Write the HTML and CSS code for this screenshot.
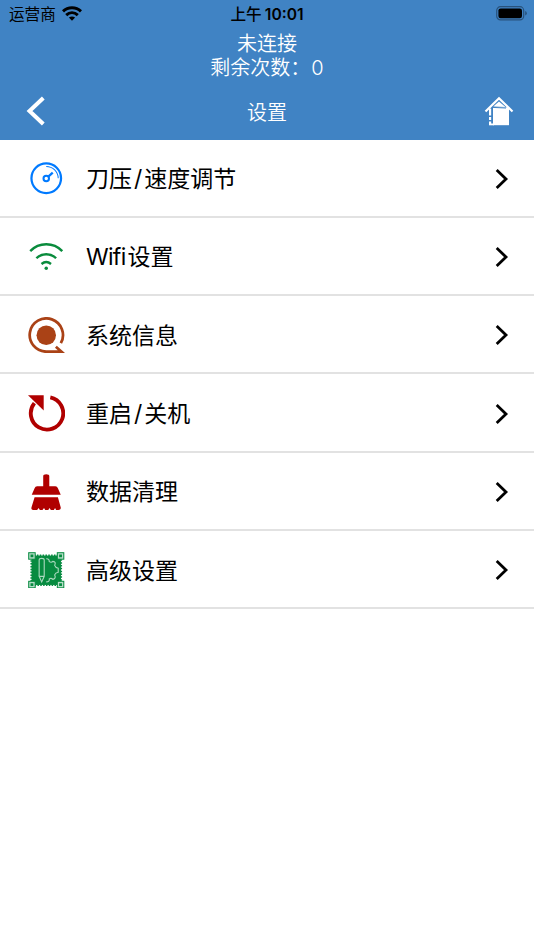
FILE: index.html
```html
<!DOCTYPE html>
<html lang="zh-CN">
<head>
<meta charset="UTF-8" />
<meta name="viewport" content="width=device-width, initial-scale=1.0"/>
<title>设置</title>
<link rel="stylesheet" href="styles.css">
</head>
<body>
<header class="header">
  <!-- Status bar -->
  <div class="status">
    <div class="carrier">
      <span>运营商</span>
      <svg class="signal" width="20" height="15" viewBox="0 0 20 15" fill="none" stroke="#000" stroke-width="3">
        <path d="M1 5.4C6 .6 14 .6 19 5.4"/>
        <path d="M4.2 9.1C7.6 6 12.4 6 15.8 9.1"/>
        <path d="M6.9 11.6Q10 9.3 13.1 11.6L10 14.8Z" fill="#000" stroke="none"/>
      </svg>
    </div>
    <div class="time">上午 <b>10:01</b></div>
    <svg class="battery" width="31" height="15" viewBox="0 0 31 15">
      <rect x=".7" y=".7" width="27" height="13.2" rx="3.8" fill="none" stroke="#28527c" stroke-width="1.2"/>
      <rect x="2.4" y="2.4" width="23.6" height="9.8" rx="2.2"/>
      <path d="M29.2 5Q30.8 5.5 30.8 7.3T29.2 9.6Z" fill="#28527c"/>
    </svg>
  </div>

  <div class="connection">
    <div>未连接</div>
    <div>剩余次数：<span class="count">0</span></div>
  </div>

  <nav class="nav">
    <svg class="back" width="20" height="30" viewBox="0 0 20 30" fill="none" stroke="#fff" stroke-width="4">
      <path d="M18.3 2L4.5 15L18.3 28"/>
    </svg>
    <div class="title">设置</div>
    <svg class="home" width="30" height="30" viewBox="0 0 30 30">
      <path d="M1.5 15.5L15 2.2L28.5 15.5" fill="none" stroke="#fff" stroke-width="2.2"/>
      <path d="M9.3 10.6L15 5.4L21.5 11Z" fill="#fff"/>
      <path d="M9 11.3H25V29.2H9Z" fill="#fff"/>
      <path d="M6.1 12.5V29" stroke="#fff" stroke-width="2.2" stroke-dasharray="7 1.5 3 1.5"/>
      <path d="M5 28.4H10" stroke="#fff" stroke-width="1.8"/>
      <path d="M8.5 11.4L22 12" stroke="#4083c4" stroke-width="1"/>
      <path d="M8.3 12V27" stroke="#4083c4" stroke-width="1"/>
    </svg>
  </nav>
</header>

<main class="menu">
  <div class="row">
    <svg class="icon" viewBox="0 0 36 36" fill="none" stroke="#007aff">
      <circle cx="18" cy="18" r="14.6" stroke-width="2.2"/>
      <circle cx="18" cy="18.3" r="2.7" stroke-width="2"/>
      <path d="M20 16.4L24.4 12.4" stroke-width="2.2"/>
      <path d="M18 6.3A11.8 11.8 0 0 1 29.8 18" stroke-width="1"/>
    </svg>
    <span class="label">刀压<i>/</i>速度调节</span>
    <svg class="arrow" viewBox="0 0 14 20"><path d="M1.7 1L11 10L1.7 19"/></svg>
  </div>
  <div class="row">
    <svg class="icon" viewBox="0 0 36 36" fill="none" stroke="#098b3c" stroke-width="2.4">
      <path d="M2.2 12C11 3 25 3 33.8 12"/>
      <path d="M8.3 19C13.5 13.7 22.5 13.7 27.7 19"/>
      <path d="M13.3 24.6Q18 21 22.7 24.6"/>
      <circle cx="18" cy="28.9" r="1.7" fill="#098b3c" stroke="none"/>
    </svg>
    <span class="label"><span class="latin">Wifi</span><em>设置</em></span>
    <svg class="arrow" viewBox="0 0 14 20"><path d="M1.7 1L11 10L1.7 19"/></svg>
  </div>
  <div class="row">
    <svg class="icon" viewBox="0 0 36 36" fill="none" stroke="#aa4216" stroke-width="2.7">
      <path d="M32.4 25.8A16.4 16.4 0 1 0 18 34.2H33L27.5 29.3"/>
      <circle cx="18" cy="18" r="9.6" fill="#aa4216" stroke="none"/>
    </svg>
    <span class="label">系统信息</span>
    <svg class="arrow" viewBox="0 0 14 20"><path d="M1.7 1L11 10L1.7 19"/></svg>
  </div>
  <div class="row">
    <svg class="icon" viewBox="0 0 36 36">
      <path d="M6.3 8A16 16 0 1 0 22 2.4" fill="none" stroke="#b00000" stroke-width="3.8"/>
      <path d="M0 .3H15.5V15.2Z" fill="#b00000"/>
    </svg>
    <span class="label">重启<i>/</i>关机</span>
    <svg class="arrow" viewBox="0 0 14 20"><path d="M1.7 1L11 10L1.7 19"/></svg>
  </div>
  <div class="row">
    <svg class="icon" viewBox="0 0 36 36" fill="#b00000">
      <path d="M15 12V2.2Q15 .3 18 .3T21 2.2V12H27Q28.8 12 29.5 14L32.3 20.5H3.7L6.5 14Q7.2 12 9 12Z"/>
      <path d="M6.5 23H29.5L32.3 33Q32.5 35.5 30 35.5H27.7L26.7 33.5L25.5 35.5H22.5L21.3 33.5L20 35.5H17L15.8 33.5L14.3 35.5H11.7L10.5 33.5L9 35.5H5Q3 35.5 3.4 33Z"/>
    </svg>
    <span class="label">数据清理</span>
    <svg class="arrow" viewBox="0 0 14 20"><path d="M1.7 1L11 10L1.7 19"/></svg>
  </div>
  <div class="row">
    <svg class="icon" viewBox="0 0 36 36" fill="none">
      <rect x="3.5" y="3.5" width="29" height="29" fill="#078b40"/>
      <rect x="3.2" y="3.2" width="29.6" height="29.6" stroke="#078b40" stroke-width="1.6" stroke-dasharray="1.5 1.3"/>
      <g fill="#b5ddc7" stroke="#078b40">
        <rect x=".7" y=".7" width="6.4" height="6.4"/>
        <rect x="28.9" y=".7" width="6.4" height="6.4"/>
        <rect x=".7" y="28.9" width="6.4" height="6.4"/>
        <rect x="28.9" y="28.9" width="6.4" height="6.4"/>
      </g>
      <path fill="#078b40" d="M2.5 2.5h2.8v2.8H2.5zM30.7 2.5h2.8v2.8h-2.8zM2.5 30.7h2.8v2.8H2.5zM30.7 30.7h2.8v2.8h-2.8z"/>
      <!-- knife and half gear -->
      <g stroke="#a9d8bd" stroke-width="1.1">
        <path d="M11 24V8Q11 6.3 13.5 6.3T16 8V24L13.5 29.5L11 24H16"/>
        <path d="M18 6.7Q21 6.3 21 9.5Q23 10.8 24.5 9.2Q28 9.6 26.3 13.2Q27 15.5 29.8 16V20Q27 20.6 26.3 22.6Q28 26 24.5 27Q23 25.4 21 26.5Q21.5 29.3 18 29.5"/>
      </g>
    </svg>
    <span class="label">高级设置</span>
    <svg class="arrow" viewBox="0 0 14 20"><path d="M1.7 1L11 10L1.7 19"/></svg>
  </div>
</main>
</body>
</html>
```
FILE: styles.css
```css
* {
  box-sizing: border-box;
}
body {
  margin: 0;
  background: #fff;
  color: #000;
  font-family: Inter, "Noto Sans CJK SC", sans-serif;
}
svg {
  display: block;
}
.header {
  height: 139.5px;
  background: #4083c4;
}
.status {
  display: grid;
  grid-template-columns: 1fr auto 1fr;
  height: 28px;
  padding: 0 7px 0 9px;
  align-items: center;
  font-size: 15.6px;
  line-height: 26px;
}
.carrier {
  display: flex;
  align-items: center;
  gap: 6px;
  padding-top: 2px;
}
.signal {
  margin-bottom: 4px;
}
.time {
  padding-top: 2px;
  margin-left: -2px;
  font-weight: 500;
}
.time b {
  font-weight: 600;
  margin-left: -1px;
}
.battery {
  justify-self: end;
  margin-bottom: 1px;
}
.connection {
  padding-top: 5px;
  text-align: center;
  color: #fff;
  font-size: 20px;
  font-weight: 350;
  line-height: 23.5px;
}
.connection .count {
  margin-left: 1px;
}
.nav {
  display: grid;
  grid-template-columns: 1fr auto 1fr;
  align-items: center;
  height: 61px;
  padding: 1px 20px 0 25px;
  color: #fff;
}
.title {
  font-size: 20px;
  font-weight: 350;
  margin-left: -5px;
}
.home {
  justify-self: end;
}
.row {
  display: flex;
  align-items: center;
  height: 78.3px;
  padding: 2px 25px 0 28px;
  border-bottom: 2px solid #e2e2e2;
}
.icon {
  width: 36.5px;
  height: 36.5px;
}
.label {
  flex: 1;
  margin-left: 21.5px;
  padding-top: 1px;
  font-size: 23px;
  line-height: 34px;
}
.label i {
  margin: 0 2px;
  font-style: normal;
}
.label .latin {
  letter-spacing: -0.7px;
}
.label em {
  margin-left: 2px;
  font-style: normal;
}
.arrow {
  width: 14px;
  height: 20px;
  fill: none;
  stroke: #000;
  stroke-width: 2.8;
}
```
